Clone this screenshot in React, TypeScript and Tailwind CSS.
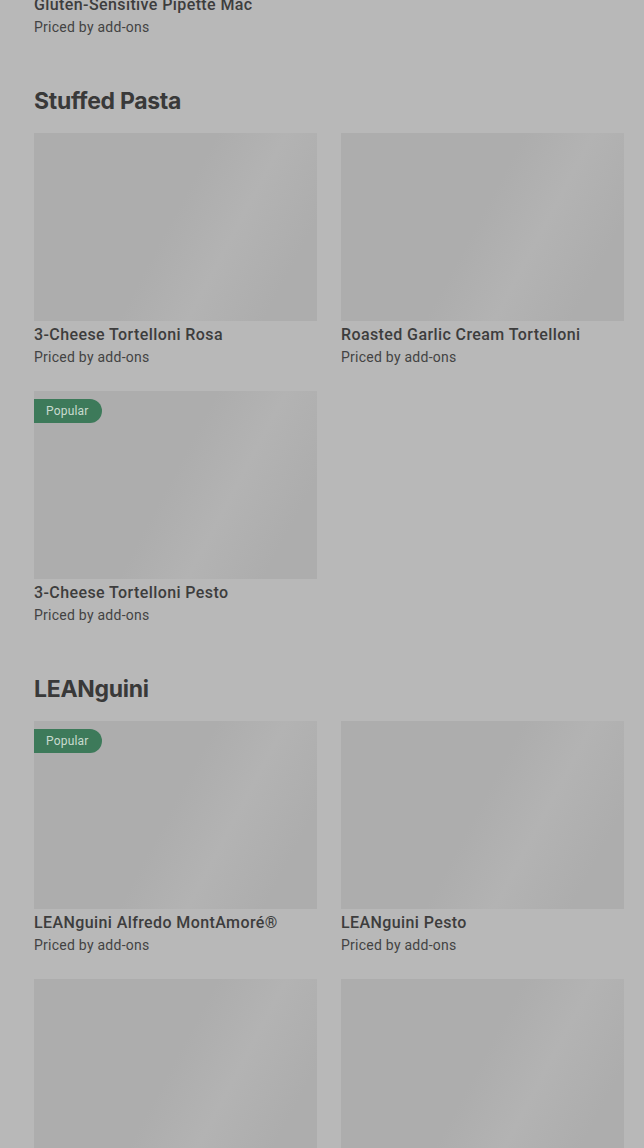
import React from 'react';

interface Item {
  name: string;
  popular?: boolean;
}

const sections: { title: string; items: Item[] }[] = [
  {
    title: 'Stuffed Pasta',
    items: [
      { name: '3-Cheese Tortelloni Rosa' },
      { name: 'Roasted Garlic Cream Tortelloni' },
      { name: '3-Cheese Tortelloni Pesto', popular: true },
    ],
  },
  {
    title: 'LEANguini',
    items: [
      { name: 'LEANguini Alfredo MontAmoré®', popular: true },
      { name: 'LEANguini Pesto' },
      { name: 'LEANguini Rosa' },
      { name: 'LEANguini Marinara' },
    ],
  },
];

const ItemCard: React.FC<{ item: Item }> = ({ item }) => (
  <div className="flex flex-col">
    <div className="relative h-[188px] w-full bg-[linear-gradient(118deg,#adadad_0%,#adadad_48%,#b3b3b3_66%,#adadad_86%,#adadad_100%)]">
      {item.popular && (
        <span className="absolute left-0 top-[8px] flex h-[24px] items-center rounded-r-full bg-[#3d7a5a] pl-[12px] pr-[13px] font-['Roboto',sans-serif] text-[12px] tracking-[0.2px] text-[#c9dbcf]">
          Popular
        </span>
      )}
    </div>
    <div className="mt-[4px] font-['Roboto',sans-serif] text-[16px] font-medium leading-[20px] tracking-[0.4px] text-[#3d3d3d]">
      {item.name}
    </div>
    <div className="mt-[2px] font-['Roboto',sans-serif] text-[14px] leading-[20px] tracking-[0.25px] text-[#434343]">
      Priced by add-ons
    </div>
  </div>
);

export default function App() {
  return (
    <div className="h-[1148px] w-[644px] overflow-hidden bg-[#b8b8b8] pl-[34px] pr-[20px]">
      {/* tail of the previous section */}
      <div className="-mt-[5px] flex flex-col">
        <div className="font-['Roboto',sans-serif] text-[16px] font-medium leading-[20px] tracking-[0.4px] text-[#3d3d3d]">
          Gluten-Sensitive Pipette Mac
        </div>
        <div className="mt-[2px] font-['Roboto',sans-serif] text-[14px] leading-[20px] tracking-[0.25px] text-[#434343]">
          Priced by add-ons
        </div>
      </div>

      {sections.map((s) => (
        <section key={s.title} className="mt-[48px]">
          <h2 className="font-['Inter',sans-serif] text-[23px] font-bold leading-[32px] tracking-[-0.3px] text-[#393939]">
            {s.title}
          </h2>
          <div className="mt-[16px] grid grid-cols-2 gap-x-[24px] gap-y-[24px]">
            {s.items.map((it) => (
              <ItemCard key={it.name} item={it} />
            ))}
          </div>
        </section>
      ))}
    </div>
  );
}
